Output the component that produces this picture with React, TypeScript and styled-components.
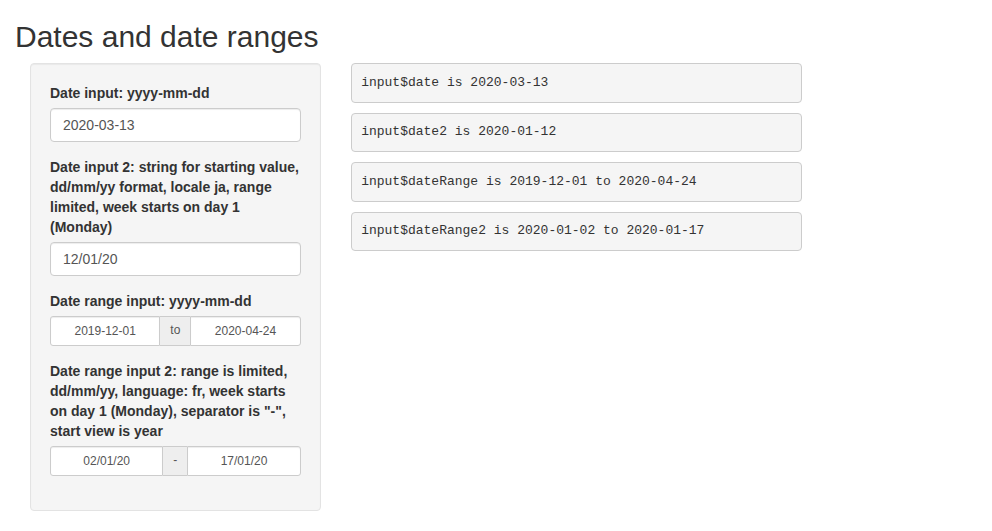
import React, { FC } from 'react';
import styled, { createGlobalStyle } from 'styled-components';

const GlobalStyle = createGlobalStyle`
  * {
    box-sizing: border-box;
  }
  body {
    margin: 0;
    font-family: "Liberation Sans", Arial, Helvetica, sans-serif;
    font-size: 14px;
    line-height: 1.42857143;
    color: #333;
    background: #fff;
  }
`;

const Page = styled.div`
  padding: 0 15px;
`;

const Title = styled.h2`
  margin: 20px 0 10px;
  font-size: 30px;
  font-weight: 500;
  line-height: 1.1;
  color: #333;
`;

const Row = styled.div`
  display: flex;
  align-items: flex-start;
`;

const Column = styled.div<{ $span: number }>`
  flex: 0 0 ${(p) => (p.$span / 12) * 100}%;
  min-width: 0;
  padding: 0 15px;
`;

const Well = styled.form`
  min-height: 20px;
  padding: 19px;
  margin-bottom: 20px;
  background-color: #f5f5f5;
  border: 1px solid #e3e3e3;
  border-radius: 4px;
  box-shadow: inset 0 1px 1px rgba(0, 0, 0, 0.05);
`;

const FormGroup = styled.div`
  margin-bottom: 15px;
`;

const Label = styled.label`
  display: inline-block;
  max-width: 100%;
  margin-bottom: 5px;
  font-weight: bold;
`;

const TextInput = styled.input`
  display: block;
  width: 100%;
  height: 34px;
  padding: 6px 12px;
  font-family: inherit;
  font-size: 14px;
  line-height: 1.42857143;
  color: #555;
  background-color: #fff;
  border: 1px solid #ccc;
  border-radius: 4px;
  box-shadow: inset 0 1px 1px rgba(0, 0, 0, 0.075);
`;

const RangeGroup = styled.div`
  display: flex;
  width: 100%;
  height: 30px;
`;

const RangeInput = styled.input<{ $side: 'left' | 'right' }>`
  flex: 1 1 0;
  width: 0;
  min-width: 0;
  height: 30px;
  padding: 5px 10px;
  font-family: inherit;
  font-size: 12px;
  line-height: 1.5;
  text-align: center;
  color: #555;
  background-color: #fff;
  border: 1px solid #ccc;
  border-radius: ${(p) => (p.$side === 'left' ? '3px 0 0 3px' : '0 3px 3px 0')};
  box-shadow: inset 0 1px 1px rgba(0, 0, 0, 0.075);
`;

const Addon = styled.span`
  display: flex;
  align-items: center;
  padding: 0 10px;
  font-size: 12px;
  color: #555;
  background-color: #eee;
  border: 1px solid #ccc;
  border-width: 1px 0;
  white-space: nowrap;
`;

const Output = styled.pre`
  display: block;
  margin: 0 0 10px;
  padding: 9.5px;
  font-family: "Liberation Mono", "Courier New", monospace;
  font-size: 13px;
  line-height: 1.42857143;
  color: #333;
  background-color: #f5f5f5;
  border: 1px solid #ccc;
  border-radius: 4px;
  white-space: pre-wrap;
`;

interface RangeProps {
  start: string;
  end: string;
  separator: string;
}

const DateRange: FC<RangeProps> = ({ start, end, separator }) => (
  <RangeGroup>
    <RangeInput $side="left" type="text" defaultValue={start} readOnly />
    <Addon>{separator}</Addon>
    <RangeInput $side="right" type="text" defaultValue={end} readOnly />
  </RangeGroup>
);

const outputs = [
  'input$date is 2020-03-13',
  'input$date2 is 2020-01-12',
  'input$dateRange is 2019-12-01 to 2020-04-24',
  'input$dateRange2 is 2020-01-02 to 2020-01-17',
];

const App: FC = () => (
  <>
    <GlobalStyle />
    <Page>
      <Title>Dates and date ranges</Title>
      <Row>
        <Column $span={4}>
          <Well onSubmit={(e) => e.preventDefault()}>
            <FormGroup>
              <Label htmlFor="date">Date input: yyyy-mm-dd</Label>
              <TextInput id="date" type="text" defaultValue="2020-03-13" readOnly />
            </FormGroup>
            <FormGroup>
              <Label htmlFor="date2">
                Date input 2: string for starting value, dd/mm/yy format, locale ja, range limited,
                week starts on day 1 (Monday)
              </Label>
              <TextInput id="date2" type="text" defaultValue="12/01/20" readOnly />
            </FormGroup>
            <FormGroup>
              <Label>Date range input: yyyy-mm-dd</Label>
              <DateRange start="2019-12-01" end="2020-04-24" separator="to" />
            </FormGroup>
            <FormGroup>
              <Label>
                Date range input 2: range is limited, dd/mm/yy, language: fr, week starts on day 1
                (Monday), separator is "-", start view is year
              </Label>
              <DateRange start="02/01/20" end="17/01/20" separator="-" />
            </FormGroup>
          </Well>
        </Column>
        <Column $span={6}>
          {outputs.map((text) => (
            <Output key={text}>{text}</Output>
          ))}
        </Column>
      </Row>
    </Page>
  </>
);

export default App;
